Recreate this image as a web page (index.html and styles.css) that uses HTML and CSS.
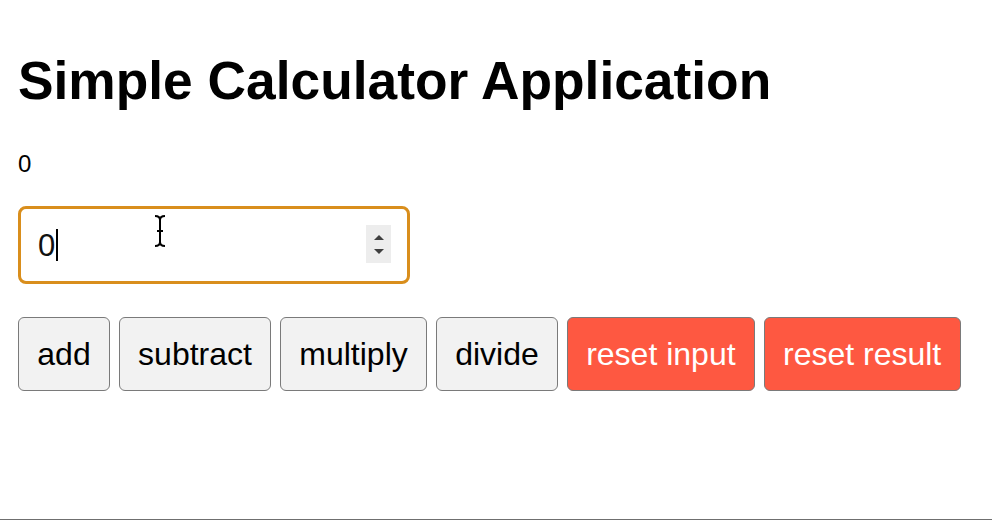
FILE: index.html
```html
<!DOCTYPE html>
<html lang="en">
<head>
<meta charset="utf-8">
<title>Simple Calculator Application</title>
<link rel="stylesheet" href="styles.css">
</head>
<body>
<main class="app">
  <h1 class="title">Simple Calculator Application</h1>
  <p class="result">0</p>
  <div class="field">
    <span class="field-value">0</span><span class="caret"></span>
    <span class="spinner">
      <svg width="14" height="32" viewBox="0 0 14 32"><path d="M2 12 L7 7 L12 12 Z" fill="#3f3f3f"/><path d="M2 21 L12 21 L7 26 Z" fill="#3f3f3f"/></svg>
    </span>
    <svg class="ibeam" width="14" height="34" viewBox="0 0 14 34"><path d="M2 2 Q7 2 7 6 Q7 2 12 2 M7 6 V28 M2 32 Q7 32 7 28 Q7 32 12 32 M4 17 H10" fill="none" stroke="#000" stroke-width="2"/></svg>
  </div>
  <div class="actions">
    <button class="btn">add</button>
    <button class="btn">subtract</button>
    <button class="btn">multiply</button>
    <button class="btn">divide</button>
    <button class="btn btn-reset">reset input</button>
    <button class="btn btn-reset">reset result</button>
  </div>
</main>
<div class="frame-edge"></div>
</body>
</html>
```
FILE: styles.css
```css
html, body {
  margin: 0;
  padding: 0;
  background: #fff;
}
body {
  font-family: "Liberation Sans", Arial, sans-serif;
  color: #000;
}
.app {
  padding: 51px 18px 0 18px;
  display: flex;
  flex-direction: column;
  align-items: flex-start;
}
.title {
  font-size: 53.3px;
  font-weight: bold;
  line-height: 60px;
  margin: 0;
}
.result {
  font-size: 24px;
  line-height: 28px;
  margin: 39px 0 0 0;
}
.field {
  position: relative;
  box-sizing: border-box;
  width: 392px;
  height: 78px;
  margin-top: 28px;
  border: 3px solid #d98e1c;
  border-radius: 8px;
  display: flex;
  align-items: center;
  padding-left: 17px;
}
.field-value {
  font-size: 31px;
  line-height: 1;
  color: #111;
}
.caret {
  width: 2px;
  height: 32px;
  background: #000;
  margin-left: 1px;
}
.spinner {
  position: absolute;
  right: 16px;
  top: 16px;
  width: 25px;
  height: 38px;
  background: #ededed;
  display: flex;
  align-items: center;
  justify-content: center;
}
.ibeam {
  position: absolute;
  left: 132px;
  top: 5px;
}
.actions {
  display: flex;
  gap: 8.8px;
  margin-top: 33px;
}
.btn {
  font-family: "Liberation Sans", Arial, sans-serif;
  font-size: 32px;
  height: 74px;
  padding: 0 18.3px;
  background: #f2f2f2;
  color: #000;
  border: 1px solid #7a7a7a;
  border-radius: 6px;
}
.btn-reset {
  background: #fe5841;
  color: #fff;
}
.frame-edge {
  position: fixed;
  left: 0;
  right: 0;
  bottom: 0;
  height: 1px;
  background: #6f6f6f;
}
```
